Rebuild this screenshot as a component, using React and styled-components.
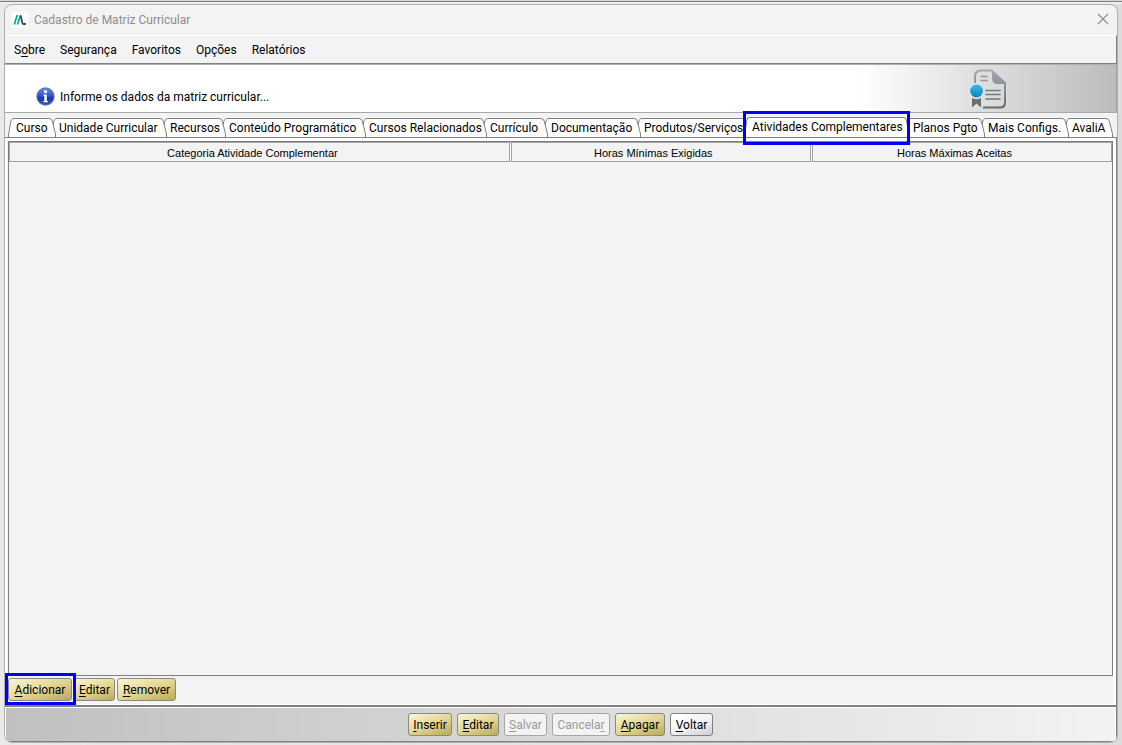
import React from "react";
import styled, { createGlobalStyle, css } from "styled-components";

const GlobalStyle = createGlobalStyle`
  * { box-sizing: border-box; }
  body {
    margin: 0;
    background: #e4e4e4;
    color: #000;
    font: 12px/16px Roboto, "Segoe UI", sans-serif;
  }
  button { font: inherit; color: inherit; }
`;

const Page = styled.div`
  min-height: 100vh;
  display: flex;
  flex-direction: column;
  padding: 0 4px 2px;
  border-top: 1px solid #d6d6d2;
  background: linear-gradient(90deg, #e9e9e9, #dcdcdc);
`;

const ParentEdge = styled.div`
  height: 3px;
  margin: 0 -4px;
  border-top: 1px solid #808080;
  background: #ededed;
`;

const Window = styled.div`
  flex: 1;
  display: flex;
  flex-direction: column;
  border: 1px solid #b0b0b0;
  border-radius: 8px;
  background: #f3f3f3;
  overflow: hidden;
`;

const TitleBar = styled.header`
  display: flex;
  align-items: center;
  gap: 6px;
  height: 30px;
  padding: 0 8px 0 7px;
  color: #8e8e8e;
`;

const Title = styled.h1`
  flex: 1;
  margin: 0;
  font: inherit;
`;

const CloseButton = styled.button`
  display: flex;
  padding: 0 0 2px;
  border: 0;
  background: none;
  color: #8c8c8c;
`;

const MenuBar = styled.nav`
  display: flex;
  align-items: center;
  gap: 15px;
  height: 29px;
  padding: 0 9px;
  border-top: 1px solid #fff;
  border-right: 1px solid #808080;
  border-bottom: 1px solid #808080;
`;

const MenuItem = styled.button`
  padding: 0;
  border: 0;
  background: none;
`;

const Mnemonic = styled.span`
  text-decoration: underline;
  text-underline-offset: 2px;
`;

const Banner = styled.div`
  display: flex;
  align-items: flex-end;
  justify-content: space-between;
  height: 49px;
  padding: 0 109px 3px 31px;
  border-top: 1px solid #b0b0b0;
  border-bottom: 1px solid #a8a8a8;
  border-right: 1px solid #a0a0a0;
  background: linear-gradient(90deg, #fff 77%, #f0f0f0 82%, #bcbcbc);
`;

const BannerInfo = styled.div`
  display: flex;
  align-items: center;
  gap: 4px;
  padding-bottom: 2px;
`;

const BannerText = styled.p`
  margin: 0;
`;

const Fixed = styled.svg`
  display: block;
  flex: none;
`;

const TabList = styled.div`
  display: flex;
  align-items: flex-end;
  height: 24px;
  padding-left: 3px;
`;

const TabButton = styled.button`
  position: relative;
  z-index: ${(p) => p.$order};
  display: flex;
  flex: 0 0 ${(p) => p.$width + 5}px;
  min-width: 0;
  height: ${(p) => (p.$active ? 20 : 19)}px;
  margin: 0 -5px 0 0;
  padding: 0;
  border: 0;
  background: none;
`;

const TabLabel = styled.span`
  position: relative;
  z-index: 1;
  flex: 1;
  min-width: 0;
  height: 100%;
  padding-top: 1px;
  border-top: 1px solid #808080;
  background: #fff;
  white-space: nowrap;
  text-align: left;
  text-indent: 2px;
`;

const Highlight = styled.span`
  position: absolute;
  z-index: 30;
  inset: ${(p) => p.$inset};
  border: 3px solid #0000fa;
  pointer-events: none;
`;

const Pane = styled.section`
  flex: 1;
  display: flex;
  flex-direction: column;
  border-top: 1px solid #808080;
  border-right: 1px solid #808080;
  background: #fff;
`;

const PaneBody = styled.div`
  flex: 1;
  display: flex;
  flex-direction: column;
  margin: 3px 3px 1px 2px;
  background: #f3f3f3;
`;

const Grid = styled.div`
  flex: 1;
  margin-left: 1px;
  border: 1px solid #808080;
`;

const Table = styled.table`
  width: 100%;
  table-layout: fixed;
  border-collapse: separate;
  border-spacing: 0;
  font: 11px/16px "Liberation Sans", Arial, sans-serif;
`;

const HeadCell = styled.th`
  width: ${(p) => p.$width};
  height: 20px;
  padding: 2px 14px 0 0;
  font-weight: normal;
  border: 1px solid #a0a0a0;
  box-shadow: inset 1px 1px #fafafa;
  & + & {
    border-left-color: #fff;
    box-shadow: inset 1px 0 #a0a0a0;
  }
`;

const RowActions = styled.div`
  display: flex;
  gap: 2px;
  padding: 2px 0 3px 1px;
`;

const gold = css`
  border-color: #8a8a80;
  background: linear-gradient(160deg, #fbf6d8, #e3d794 50%, #bba95c);
`;
const plain = css`
  border-color: #808080;
  background: linear-gradient(160deg, #fff, #f4f4f6 50%, #cfcfd4);
`;

const ActionButton = styled.button`
  position: relative;
  flex: 0 0 ${(p) => p.$width}px;
  height: 23px;
  padding: 0;
  border: 1px solid;
  border-radius: 3px;
  white-space: nowrap;
  ${(p) => (p.$plain ? plain : gold)}
  &:disabled {
    border-color: #a6a6a6;
    background: #f3f3f3;
    color: #9a9a9a;
  }
`;

const Footer = styled.footer`
  display: flex;
  justify-content: center;
  gap: 5px;
  height: 37px;
  padding: 6px 0 5px;
  border-top: 2px solid #808080;
  border-right: 1px solid #808080;
  border-bottom: 1px solid #808080;
  background: linear-gradient(90deg, #c0c0c0, #f3f3f3);
  box-shadow: inset 1px 1px #fff, inset -1px 0 #fff;
`;

const AppLogo = () => (
  <Fixed width="16" height="16" viewBox="0 0 16 16" aria-hidden="true">
    <rect width="16" height="16" rx="2" fill="#fff" />
    <path d="M2.3 12.5 5.3 3M5.5 12.5 8.5 3" stroke="#00a88c" strokeWidth="1.7" />
    <path d="M8.6 3.5l1.8 7.5q.3 1 1.2 1h2.4" fill="none" stroke="#3c4b50" strokeWidth="1.8" />
  </Fixed>
);

const InfoIcon = () => (
  <Fixed width="20" height="20" viewBox="0 0 20 20" aria-hidden="true">
    <defs>
      <linearGradient id="infoFill" x2="0" y2="1">
        <stop stopColor="#6a8fe0" />
        <stop offset=".5" stopColor="#2c50bd" />
        <stop offset=".51" stopColor="#1b3aa8" />
        <stop offset="1" stopColor="#2853c6" />
      </linearGradient>
    </defs>
    <circle cx="9.500" cy="9.500" r="9.400" fill="#c5cbdc" />
    <circle cx="9.500" cy="9.500" r="8.500" fill="url(#infoFill)" stroke="#4760a8" strokeWidth=".8" />
    <circle cx="9.500" cy="4.700" r="1.600" fill="#fff" />
    <path d="M7.500 7.500h3.300v6.600h1v1.200H7.300v-1.200h1V8.700h-.8z" fill="#fff" />
  </Fixed>
);

const CertificateIcon = () => (
  <Fixed width="37" height="40" viewBox="0 0 37 40" aria-hidden="true">
    <defs>
      <linearGradient id="paper" x2="0" y2="1">
        <stop stopColor="#a5abb2" />
        <stop offset="1" stopColor="#666b71" />
      </linearGradient>
      <linearGradient id="seal" x2="0" y2="1">
        <stop stopColor="#38b8e8" />
        <stop offset="1" stopColor="#0786c2" />
      </linearGradient>
    </defs>
    <path
      d="M4 14V7Q4 0.500 11 .5h11l14 13v20.500q0 5.500-5.500 5.500H13v-2h16.500q4.500 0 4.500-4.500V15h-6q-6 0-6-6V2.500H11.500Q6 2.500 6 8v6z"
      fill="url(#paper)"
    />
    <path d="M11 7.500h6M11 11.500h6" stroke="#91979e" strokeWidth="1.500" strokeLinecap="round" />
    <path d="M16 21.500h14M16 25.500h14M16 30h14" stroke="#747a81" strokeWidth="1.700" strokeLinecap="round" />
    <path d="M2 29q4.500 2.500 9 0v9.500l-4.500-4-4.500 4z" fill="#686d73" />
    <circle cx="6.500" cy="22" r="6.400" fill="url(#seal)" />
  </Fixed>
);

const CloseIcon = () => (
  <svg width="12" height="12" viewBox="0 0 12 12" aria-hidden="true">
    <path d="M1 1l10 10M11 1L1 11" stroke="currentColor" strokeWidth="1.100" />
  </svg>
);

const LeftCap = () => (
  <Fixed width="6" height="100%" viewBox="0 0 6 19" preserveAspectRatio="none" aria-hidden="true">
    <path d="M.5 19V17L2.500 5Q3 .5 6 .5V19z" fill="#fff" />
    <path d="M.5 19V17L2.500 5Q3 .5 6 .5" fill="none" stroke="#808080" />
  </Fixed>
);

const RightCap = () => (
  <Fixed width="7" height="100%" viewBox="0 0 7 19" preserveAspectRatio="none" aria-hidden="true">
    <path d="M0 .5Q3 .5 3.500 4L6.500 16V19H0z" fill="#fff" />
    <path d="M0 .5Q3 .5 3.500 4L6.500 16V19" fill="none" stroke="#808080" />
  </Fixed>
);

const menus = ["Sobre", "Segurança", "Favoritos", "Opções", "Relatórios"];

const tabs = [
  ["Curso", 43],
  ["Unidade Curricular", 111],
  ["Recursos", 59],
  ["Conteúdo Programático", 140],
  ["Cursos Relacionados", 121],
  ["Currículo", 61],
  ["Documentação", 93],
  ["Produtos/Serviços", 108],
  ["Atividades Complementares", 161],
  ["Planos Pgto", 75],
  ["Mais Configs.", 84],
  ["AvaliA", 44],
];
const activeTab = "Atividades Complementares";

const rowActions = [
  { label: "Adicionar", width: 64, marked: true },
  { label: "Editar", width: 41 },
  { label: "Remover", width: 59 },
];

const footerActions = [
  { label: "Inserir", width: 44 },
  { label: "Editar", width: 42 },
  { label: "Salvar", width: 43, disabled: true },
  { label: "Cancelar", width: 58, disabled: true, mnemonic: 7 },
  { label: "Apagar", width: 50 },
  { label: "Voltar", width: 43, plain: true },
];

const KeyLabel = ({ text, at = 0 }) => (
  <>
    {text.slice(0, at)}
    <Mnemonic>{text[at]}</Mnemonic>
    {text.slice(at + 1)}
  </>
);

const Action = ({ action }) => (
  <ActionButton type="button" $width={action.width} $plain={action.plain} disabled={action.disabled}>
    <KeyLabel text={action.label} at={action.mnemonic} />
    {action.marked && <Highlight $inset="-6px -5px -5px -4px" />}
  </ActionButton>
);

export default function App() {
  return (
    <Page>
      <GlobalStyle />
      <ParentEdge />
      <Window>
        <TitleBar>
          <AppLogo />
          <Title>Cadastro de Matriz Curricular</Title>
          <CloseButton type="button" aria-label="Fechar">
            <CloseIcon />
          </CloseButton>
        </TitleBar>
        <MenuBar>
          {menus.map((name, i) => (
            <MenuItem type="button" key={name}>
              {i === 0 ? <KeyLabel text={name} at={1} /> : name}
            </MenuItem>
          ))}
        </MenuBar>
        <Banner>
          <BannerInfo>
            <InfoIcon />
            <BannerText>Informe os dados da matriz curricular...</BannerText>
          </BannerInfo>
          <CertificateIcon />
        </Banner>
        <TabList role="tablist">
          {tabs.map(([name, width], i) => {
            const active = name === activeTab;
            return (
              <TabButton
                type="button"
                role="tab"
                aria-selected={active}
                key={name}
                $width={width}
                $active={active}
                $order={active ? 20 : tabs.length - i}
              >
                <LeftCap />
                <TabLabel>{name}</TabLabel>
                <RightCap />
                {active && <Highlight $inset="-6px 0 -8px -1px" />}
              </TabButton>
            );
          })}
        </TabList>
        <Pane role="tabpanel">
          <PaneBody>
            <Grid>
              <Table>
                <thead>
                  <tr>
                    <HeadCell $width="45.4%">Categoria Atividade Complementar</HeadCell>
                    <HeadCell $width="27.3%">Horas Mínimas Exigidas</HeadCell>
                    <HeadCell $width="27.3%">Horas Máximas Aceitas</HeadCell>
                  </tr>
                </thead>
              </Table>
            </Grid>
            <RowActions>
              {rowActions.map((a) => (
                <Action key={a.label} action={a} />
              ))}
            </RowActions>
          </PaneBody>
        </Pane>
        <Footer>
          {footerActions.map((a) => (
            <Action key={a.label} action={a} />
          ))}
        </Footer>
      </Window>
    </Page>
  );
}
